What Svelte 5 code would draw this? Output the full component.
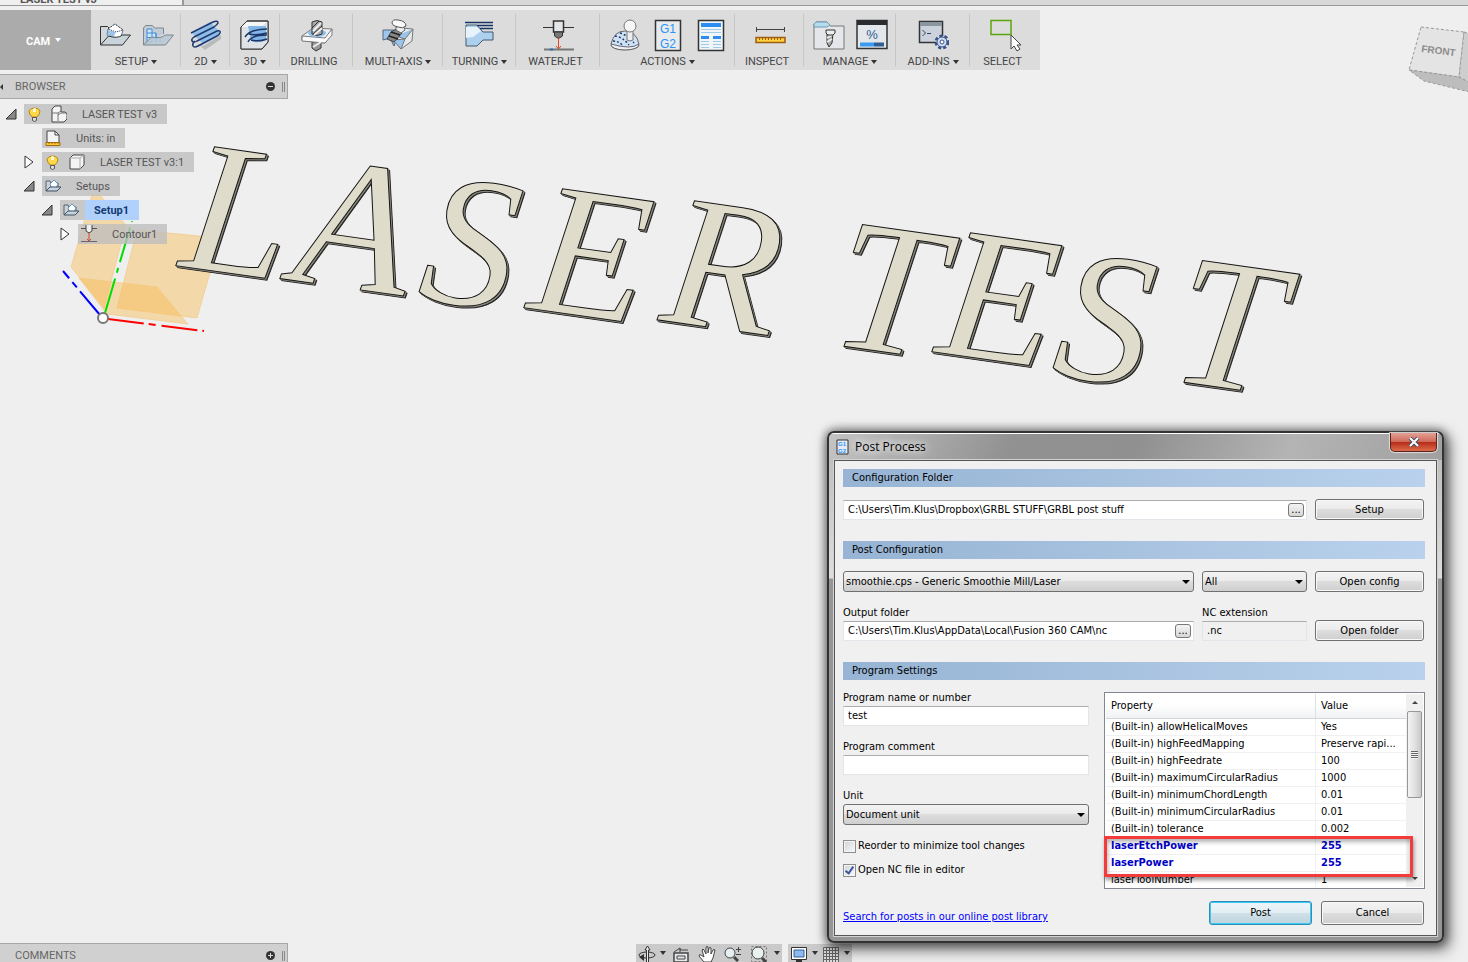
<script lang="ts">
    let configFolder = "C:\\Users\\Tim.Klus\\Dropbox\\GRBL STUFF\\GRBL post stuff";
    let outputFolder = "C:\\Users\\Tim.Klus\\AppData\\Local\\Fusion 360 CAM\\nc";
    let extension = ".nc";
    let programName = "test";
    let programComment = "";
    let reorder = false;
    let openInEditor = true;

    const groups = [
        { label: "SETUP", menu: true, icons: ["setup", "pattern"] },
        { label: "2D", menu: true, icons: ["mill2d"] },
        { label: "3D", menu: true, icons: ["mill3d"] },
        { label: "DRILLING", menu: false, icons: ["drill"] },
        { label: "MULTI-AXIS", menu: true, icons: ["multiaxis"] },
        { label: "TURNING", menu: true, icons: ["turning"] },
        { label: "WATERJET", menu: false, icons: ["waterjet"] },
        { label: "ACTIONS", menu: true, icons: ["simulate", "post", "sheet"] },
        { label: "INSPECT", menu: false, icons: ["inspect"] },
        { label: "MANAGE", menu: true, icons: ["library", "tasks"] },
        { label: "ADD-INS", menu: true, icons: ["addins"] },
        { label: "SELECT", menu: false, icons: ["select"] }
    ];

    const tree = [
        { label: "LASER TEST v3", depth: 0, state: "open", icons: ["bulb", "parts"] },
        { label: "Units: in", depth: 1, state: "", icons: ["units"] },
        { label: "LASER TEST v3:1", depth: 1, state: "closed", icons: ["bulb", "cube"] },
        { label: "Setups", depth: 1, state: "open", icons: ["folder"] },
        { label: "Setup1", depth: 2, state: "open", icons: ["folder"], active: true },
        { label: "Contour1", depth: 3, state: "closed", icons: ["jet"] }
    ];

    const properties = [
        { name: "(Built-in) allowHelicalMoves", value: "Yes" },
        { name: "(Built-in) highFeedMapping", value: "Preserve rapi..." },
        { name: "(Built-in) highFeedrate", value: "100" },
        { name: "(Built-in) maximumCircularRadius", value: "1000" },
        { name: "(Built-in) minimumChordLength", value: "0.01" },
        { name: "(Built-in) minimumCircularRadius", value: "0.01" },
        { name: "(Built-in) tolerance", value: "0.002" },
        { name: "laserEtchPower", value: "255", changed: true },
        { name: "laserPower", value: "255", changed: true },
        { name: "laserToolNumber", value: "1" }
    ];
</script>

{#snippet toolIcon(name)}
    <svg width="32" height="34" viewBox="0 0 32 34" fill="none" stroke="#333" aria-hidden="true">
        {#if name == "setup"}
            <path d="M1.500 27V8.500h7l2 2h12v6" fill="#d3d6da" />
            <path d="M9 11l7-5 8 6-2 7-9 2-5-4z" fill="#fff" stroke="#5b7fa8" />
            <path d="M9 11l7-5 8 6-7 2z" fill="#fff" stroke="#222" stroke-dasharray="1 1" />
            <path d="M9 12v5l5 3 3-6z" fill="#9cc4e8" stroke="none" />
            <path d="M1.500 27l8-9q9 3 14-1h8l-8 10z" fill="#c9d3dc" />
        {:else if name == "pattern"}
            <path d="M1.500 27V10l2-2.500h7l2 2.500h9v6" fill="#c3ccd4" stroke="#7b8791" />
            <path d="M5 11h5v13H5zM5 15h9v9M5 19.500h13v5M14 15v9" stroke="#3c8edb" fill="#cfe4f6" />
            <path d="M1.500 27l8-8q9 2 14-2h8l-8 10z" fill="#b9c8d3" fill-opacity=".85" stroke="#7b8791" />
        {:else if name == "mill2d"}
            <path d="M2 15L20 4l11 11-18 11z" fill="#8ebde8" stroke="none" />
            <path d="M13 28l18-11v4L15 32 7 25z" fill="#b9babc" stroke="none" />
            <path d="M1 15L23 4q5-2 5 1-1 2-4 4L4 19q-3 2-2 4 2 2 5 0l20-10q4-1 3 2-1 2-3 3L8 28q-4 2-5 0-1-3 2-5" stroke="#1e3a70" stroke-width="1.500" />
        {:else if name == "mill3d"}
            <path d="M2 9l6-6h21v21l-6 7H2z" fill="#f4f5f6" />
            <path d="M2 9h20l7-6v21l-7 7H2z" fill="#dfe3e8" stroke="none" />
            <path d="M9 8h18v14q-8 4-15 1z" fill="#82b6e8" stroke="none" />
            <path d="M6 19q5-8 22-8M10 16q7 2 18-1M9 24q3-7 19-7M12 22q8 2 16-1" stroke="#1c3767" stroke-width="1.500" />
            <path d="M2 9l6-6h21v21l-6 7H2z" />
        {:else if name == "drill"}
            <path d="M11 24v6l4 3 5-3v-7z" fill="#999" />
            <path d="M1 18l11-8 19 1-7 14-23-3z" fill="#edf0f2" stroke="#777" />
            <path d="M1 18l23 2 7-9v6l-7 8-23-2z" fill="#fafbfc" stroke="#777" />
            <ellipse cx="16" cy="15" rx="9" ry="4" fill="#8bbdea" stroke="none" />
            <path d="M11 4q5-3 10 0v12q-5 3-10 0z" fill="#aaa" />
            <path d="M12 13l8-8M13 17l8-7M12 29l8-5" stroke="#eee" stroke-width="2" />
            <path d="M11 10l7-7M12 16l9-8" stroke="#333" />
        {:else if name == "multiaxis"}
            <path d="M1 12h16l-5 16-4-8-7 2z" fill="#9cc6ec" stroke="#567" />
            <path d="M14 18l6-8 11 1-1 12-11 8z" fill="#e6e9eb" stroke="#777" />
            <path d="M14 18l9 3 8-10M23 21l-4 10-8-9z" fill="#9ac4eb" stroke="#777" />
            <path d="M9 14l8-4 3 5-8 9-7-3z" fill="#888" stroke="#444" />
            <path d="M7 18l9 3M9 14l9 3" stroke="#222" stroke-width="1.500" />
            <path d="M14 9l7-2 2 5-4 3-5-3z" fill="#eee" stroke="#666" />
            <path d="M10 5q0-4 6-3 8 1 8 6-3 3-8 1-6-1-6-4z" fill="#fafafa" stroke="#555" />
        {:else if name == "turning"}
            <path d="M2 7h11l6 7h10v8H19l-6 6H2z" fill="#aed0ef" stroke="#44586c" />
            <path d="M2 9h11l4 4-8 6-7 1z" fill="#e7f2fb" stroke="none" />
            <path d="M1 4.500h28M13 7.500h16M16 10.500h13" stroke="#173463" stroke-width="1.500" />
        {:else if name == "waterjet"}
            <path d="M1 9.500h31" stroke="#333" />
            <path d="M11.500 3h10v11h-10z" fill="#e4e7ea" stroke-width="1.500" />
            <path d="M12.500 14h8v4l-3 2h-2l-3-2z" fill="#777" />
            <path d="M16.500 20v11M14 28l2.500 3 2.500-3" stroke="#de4a28" />
            <path d="M2 31.500h30" stroke="#777" stroke-width="2" />
            <path d="M8 31.500h3" stroke="#2670c0" stroke-width="2" />
        {:else if name == "simulate"}
            <ellipse cx="16" cy="27" rx="14" ry="5" fill="#eef2f5" stroke="#555" />
            <path d="M2 26q3-13 14-13t14 13q-8 6-28 0z" fill="#cfe2f3" stroke="#667" />
            <path d="M6 18q8 1 14 9M11 15q9 3 14 10M4 23q6 0 10 5" stroke="#1f3a66" stroke-width="1.500" stroke-dasharray="2 2" />
            <path d="M18 10h6v12q-3 2-6 0z" fill="#ececec" stroke="#777" />
            <circle cx="21" cy="8" r="6" fill="#f6f6f6" stroke="#777" />
        {:else if name == "post"}
            <path d="M3.500 2.500h25v30h-25z" fill="#e8ebee" stroke-width="1.500" />
            <text x="16" y="15" class="gcode">G1</text>
            <text x="16" y="30" class="gcode">G2</text>
        {:else if name == "sheet"}
            <path d="M3.500 2.500h25v30h-25z" fill="#f1f5f8" stroke-width="1.500" />
            <path d="M6 7h20" stroke="#2b8df0" stroke-width="4" />
            <path d="M6 11.500h20M6 14.500h20M6 23.500h8M18 23.500h8M6 26.500h8M18 26.500h8M6 29.500h8M18 29.500h8" stroke="#9ccbe9" />
            <path d="M6 19.500h8M18 19.500h8" stroke="#2b8df0" stroke-width="3" />
        {:else if name == "inspect"}
            <path d="M2.500 11.500h28M2.500 9v5M30.500 9v5" stroke="#444" />
            <path d="M2 19.500h29v5H2z" fill="#ffd23d" stroke="#9b5e12" stroke-width="1.500" />
            <path d="M5.500 20v2M8.500 20v2M11.500 20v2M14.500 20v2M17.500 20v2M20.500 20v2M23.500 20v2M26.500 20v2" stroke="#9b5e12" />
        {:else if name == "library"}
            <path d="M1 6l2-2h11l3 4h14v23H1z" fill="#e4e6ea" stroke="#777" />
            <path d="M1 9h13l3-2-3-3H3L1 6z" fill="#b4dcec" stroke="#6f9db3" />
            <path d="M14 15h6l-1 10-3 4-2-4z" fill="#aaa" />
            <path d="M14 20l5-3M14 24l5-3" stroke="#eee" stroke-width="2" />
            <path d="M13 12h9v3l-2 2h-5l-2-2z" fill="#eee" />
        {:else if name == "tasks"}
            <path d="M1 2.500h30v28H1z" fill="#e3e7ec" stroke-width="1.500" />
            <path d="M1 4.500h30" stroke="#2a2c30" stroke-width="5" />
            <text x="16" y="21" class="percent">%</text>
            <path d="M4 26.500h14" stroke="#3b9bf2" stroke-width="4" />
            <path d="M18 26.500h10" stroke="#2e5f92" stroke-width="4" />
        {:else if name == "addins"}
            <path d="M2.500 3.500h23v21h-23z" fill="#ccd2dc" stroke-width="1.500" />
            <path d="M3 6h22" stroke="#8a969d" stroke-width="4" />
            <path d="M5.500 12l3 3-3 3M10 15.500h4" stroke="#30445e" />
            <circle cx="25" cy="24" r="6" fill="#d7e2f5" stroke="#395489" stroke-width="3" stroke-dasharray="3 2" />
            <circle cx="25" cy="24" r="5" fill="#cfdcf2" stroke="#395489" />
            <circle cx="25" cy="24" r="2" fill="#fff" stroke="#395489" />
        {:else if name == "select"}
            <path d="M2 2.500h20v14H2z" stroke="#5aa50a" stroke-width="1.500" />
            <path d="M22 17v14l3-3 3 5 3-2-3-4h4z" fill="#fff" stroke="#444" />
        {/if}
    </svg>
{/snippet}

{#snippet treeIcon(name)}
    <svg width="16" height="18" viewBox="0 0 16 18" fill="none" stroke="#444" aria-hidden="true">
        {#if name == "bulb"}
            <path d="M5 12q-3-3-3-6a6 5 0 0 1 11 0q0 3-3 6z" fill="#ffd84a" stroke="#b7890f" />
            <path d="M6 4q2-2 3 0v3H6z" fill="#fff9d8" stroke="none" />
            <path d="M5.500 12.500h4v3l-2 1-2-1z" fill="#ddd" stroke="#555" />
        {:else if name == "parts"}
            <path d="M1 4l3-3h6v6h4l2 2v5l-3 3H1z" fill="#f4f4f4" />
            <path d="M1 8h6v8M7 8l3-2M7 10l3-2h6" stroke="#777" />
        {:else if name == "cube"}
            <path d="M1 5l3-3h11v10l-4 4H1z" fill="#f4f4f4" />
            <path d="M1 5h10v11M11 5l4-3" stroke="#aaa" />
        {:else if name == "units"}
            <path d="M2 14V2h8l4 4v8" fill="#f3f4f6" />
            <path d="M10 2v4h4" />
            <path d="M1 13.500h14v3H1z" fill="#ffc933" stroke="#a36a0f" />
            <path d="M4 13v2M7 13v2M10 13v2M13 13v2" stroke="#a36a0f" />
        {:else if name == "folder"}
            <path d="M1 14V4h4l1 2h7v4" fill="#cdd3d9" stroke="#526273" />
            <path d="M5 7l4-4 4 4-2 4-5-1z" fill="#fff" stroke="#5e94c6" />
            <path d="M1 14l4-4h11l-4 4z" fill="#c6d4df" stroke="#405060" />
        {:else if name == "jet"}
            <path d="M0 3.500h16" stroke="#555" />
            <path d="M5 0v6l3 2 3-2V0" fill="#eee" />
            <path d="M8 8v8M6 14l2 2 2-2" stroke="#d8482a" />
            <path d="M0 16.500h16" stroke="#667" />
        {/if}
    </svg>
{/snippet}

<div class="app">
    <svg class="scene" aria-label="Model view">
        <g class="planes">
            <polygon points="92,195 100,195 126,225 104,308 71,267" />
            <polygon points="137,230 220,238 197,318 117,308" />
            <polygon points="79,278 157,287 188,324 107,314" />
        </g>
        <g fill="none" stroke-width="2">
            <path d="M105 313L132 221" stroke="#0d0" stroke-dasharray="36 6 5 6" />
            <path d="M100 315L63 271" stroke="#00f" stroke-dasharray="31 5 7 5" />
            <path d="M108 319L204 331" stroke="#f00" stroke-dasharray="36 5 7 6" />
        </g>
        <circle cx="103" cy="318" r="5" fill="#fff" stroke="#777" stroke-width="2" />
        <g class="solid">
            <text x="178 290 416 526 658" y="266 280 298 308 320" rotate="8">LASER</text>
            <text x="828 934 1050 1168" y="344 352 374 380" rotate="8">TEST</text>
        </g>
    </svg>

    <svg class="view-cube" viewBox="0 0 60 72" width="60" height="72" aria-label="View cube">
        <path d="M14 3l42 8 4-2v44l-9 7-50-13z" fill="#ddd" />
        <path d="M13 3l43 5-5 45L1 46z" fill="#e4e4e4" stroke="#999" stroke-dasharray="3 2" />
        <path d="M56 8l10 3v50l-15-8z" fill="#cecece" stroke="#999" stroke-dasharray="3 2" />
        <path d="M1 46l50 7 15 8v8L16 57z" fill="#bdbdbd" stroke="#999" stroke-dasharray="3 2" />
        <text x="13" y="28" transform="rotate(7 13 28)">FRONT</text>
    </svg>

    <div class="tabs"><span class="tab">LASER TEST v3</span></div>

    <header class="toolbar">
        <button class="workspace">CAM <i class="caret"></i></button>
        {#each groups as group}
            <div class="group">
                <div class="icons">
                    {#each group.icons as icon}
                        <button aria-label={icon}>{@render toolIcon(icon)}</button>
                    {/each}
                </div>
                <button class="caption" class:plain={!group.menu}>
                    {group.label}{#if group.menu}<i class="caret"></i>{/if}
                </button>
            </div>
        {/each}
    </header>

    <section class="browser">
        <div class="panel-head">
            <i class="collapse"></i>
            <span>BROWSER</span>
            <button class="dot" aria-label="Minimize browser">
                <svg width="9" height="9" viewBox="0 0 9 9"><circle cx="4.500" cy="4.500" r="4.500" fill="#333" /><path d="M2 4.500h5" stroke="#ddd" /></svg>
            </button>
            <i class="grip"></i>
        </div>
        <ul>
            {#each tree as node}
                <li style="padding-left: {node.depth * 18}px">
                    <span class="twisty">
                        {#if node.state == "open"}
                            <svg width="12" height="12" viewBox="0 0 12 12"><path d="M11 1v10H1z" fill="#888" stroke="#333" /></svg>
                        {:else if node.state == "closed"}
                            <svg width="12" height="14" viewBox="0 0 12 14"><path d="M2 1l8 6-8 6z" fill="#fff" stroke="#333" /></svg>
                        {/if}
                    </span>
                    <span class="chip">
                        {#each node.icons as icon}
                            {@render treeIcon(icon)}
                        {/each}
                        <span class="name" class:active={node.active}>{node.label}</span>
                    </span>
                </li>
            {/each}
        </ul>
    </section>

    <div class="comments panel-head">
        <span>COMMENTS</span>
        <button class="dot" aria-label="Add comment">
            <svg width="9" height="9" viewBox="0 0 9 9"><circle cx="4.500" cy="4.500" r="4.500" fill="#333" /><path d="M2 4.500h5M4.500 2v5" stroke="#ddd" /></svg>
        </button>
        <i class="grip"></i>
    </div>

    <nav class="navbar">
        <div class="tools">
            <button aria-label="Orbit">
                <svg width="18" height="18" viewBox="0 0 18 18" fill="none" stroke="#333"><ellipse cx="9" cy="11" rx="8" ry="3" /><path d="M8.500 18V6H7l2.500-4L12 6h-1.500v12" fill="#eee" /><path d="M6 10l-5 3 5 4z" fill="#333" stroke="none" /></svg>
            </button>
            <i class="caret"></i>
            <button class="wide" aria-label="Look at">
                <svg width="18" height="18" viewBox="0 0 18 18" fill="none" stroke="#444"><path d="M2 8l6-4v2h8M8 4v4" /><path d="M2 9h14v9H2z" fill="#e5e8eb" stroke-width="1.500" /><path d="M5 12h8v3H5z" /></svg>
            </button>
            <button class="wide" aria-label="Pan">
                <svg width="18" height="18" viewBox="0 0 18 18" fill="#fff" stroke="#444"><path d="M6 18l-5-6q0-2 2-1l3 2-2-7q1-2 2 0l2 4V3q1-1 2 0v6l1-5q1-1 2 0v6l2-4q1-1 2 0l-2 8-2 4z" /></svg>
            </button>
            <button class="wide" aria-label="Zoom">
                <svg width="18" height="18" viewBox="0 0 18 18" fill="none" stroke="#444"><circle cx="6" cy="9" r="5" fill="#e6eef2" /><path d="M10 13l4 4" stroke-width="3" /><path d="M14.500 3v5M12 5.500h5M12 10.500h5" /></svg>
            </button>
            <button class="wide" aria-label="Fit">
                <svg width="18" height="18" viewBox="0 0 18 18" fill="none" stroke="#444"><path d="M1.500 2.500h15v15h-15z" stroke="#777" stroke-dasharray="2 2" /><circle cx="8" cy="9" r="6" fill="#e9f1f0" /><path d="M12 14l4 4" stroke-width="3" /></svg>
            </button>
            <i class="caret"></i>
        </div>
        <div class="tools">
            <button aria-label="Display settings">
                <svg width="18" height="18" viewBox="0 0 18 18" fill="#fff" stroke="#333"><path d="M1.500 3.500h15v12h-15z" /><path d="M4 6h10v7H4z" fill="#8db9ef" stroke="#35609d" /><path d="M6 17h6" stroke-width="2" /></svg>
            </button>
            <i class="caret"></i>
            <button aria-label="Grid settings">
                <svg width="18" height="18" viewBox="0 0 18 18" fill="#ddd" stroke="#666"><path d="M1.500 3.500h15v15h-15zM4.500 3v16M7.500 3v16M10.500 3v16M13.500 3v16M1 6.500h16M1 9.500h16M1 12.500h16M1 15.500h16" /></svg>
            </button>
            <i class="caret"></i>
        </div>
    </nav>

    <div class="dialog" role="dialog" aria-label="Post Process">
        <div class="titlebar">
            <svg width="13" height="16" viewBox="0 0 13 16"><path d="M1 1h11v14H1z" fill="#e4ebf3" stroke="#333" /><text x="6" y="7" class="tiny">G1</text><text x="6" y="14" class="tiny">G2</text></svg>
            <h1>Post Process</h1>
            <button class="close" aria-label="Close">
                <svg width="12" height="10" viewBox="0 0 12 10"><path d="M2 1l8 8M10 1L2 9" stroke="#444c5c" stroke-width="4" /><path d="M2 1l8 8M10 1L2 9" stroke="#fff" stroke-width="2" /></svg>
            </button>
        </div>
        <div class="client">
            <h2>Configuration Folder</h2>
            <div class="row">
                <div class="field span">
                    <input type="text" aria-label="Configuration folder" bind:value={configFolder}>
                    <button class="browse" aria-label="Browse configuration folder">...</button>
                </div>
                <button class="push">Setup</button>
            </div>

            <h2>Post Configuration</h2>
            <div class="row">
                <div class="drop">
                    <select aria-label="Post processor"><option>smoothie.cps - Generic Smoothie Mill/Laser</option></select>
                </div>
                <div class="drop">
                    <select aria-label="Filter"><option>All</option></select>
                </div>
                <button class="push">Open config</button>
            </div>
            <div class="row labelled">
                <div>
                    <label for="output">Output folder</label>
                    <div class="field">
                        <input id="output" type="text" bind:value={outputFolder}>
                        <button class="browse" aria-label="Browse output folder">...</button>
                    </div>
                </div>
                <div>
                    <label for="extension">NC extension</label>
                    <div class="field off"><input id="extension" type="text" readonly bind:value={extension}></div>
                </div>
                <button class="push">Open folder</button>
            </div>

            <h2>Program Settings</h2>
            <div class="settings">
                <div class="program">
                    <div class="item">
                        <label for="program">Program name or number</label>
                        <div class="field"><input id="program" type="text" bind:value={programName}></div>
                    </div>
                    <div class="item">
                        <label for="comment">Program comment</label>
                        <div class="field"><input id="comment" type="text" bind:value={programComment}></div>
                    </div>
                    <div class="item">
                        <label for="unit">Unit</label>
                        <div class="drop"><select id="unit"><option>Document unit</option></select></div>
                    </div>
                    <label class="check"><input type="checkbox" bind:checked={reorder}>Reorder to minimize tool changes</label>
                    <label class="check"><input type="checkbox" bind:checked={openInEditor}>Open NC file in editor</label>
                </div>

                <div class="list">
                    <div class="rows">
                        <table>
                            <thead>
                                <tr><th>Property</th><th>Value</th></tr>
                            </thead>
                            <tbody>
                                {#each properties as property}
                                    <tr class:changed={property.changed}>
                                        <td>{property.name}</td>
                                        <td>{property.value}</td>
                                    </tr>
                                {/each}
                            </tbody>
                        </table>
                    </div>
                    <div class="scrollbar">
                        <i class="up"></i>
                        <div class="thumb"><i></i></div>
                        <i class="down"></i>
                    </div>
                    <div class="marker"></div>
                </div>
            </div>

            <div class="footer">
                <a href="#library">Search for posts in our online post library</a>
                <button class="push default">Post</button>
                <button class="push">Cancel</button>
            </div>
        </div>
    </div>
</div>

<style>
    :global(body) {
        background: #efefef;
    }

    .app {
        position: relative;
        min-height: 100vh;
        overflow: hidden;
        font: 11px/16px Roboto, "Liberation Sans", sans-serif;
        color: #444;
    }

    button {
        margin: 0;
        padding: 0;
        border: 0;
        background: none;
        font: inherit;
        color: inherit;
    }

    svg {
        display: block;
        flex: none;
    }

    .caret {
        display: inline-block;
        border: 3px solid transparent;
        border-top: 4px solid #333;
        border-bottom: 0;
    }

    /* model view */
    .scene {
        position: absolute;
        top: 0;
        left: 0;
        width: 100%;
        height: 100%;
        overflow: visible;
    }

    .planes polygon {
        fill: #f9bd55;
        fill-opacity: 0.45;
        stroke: #f3c47c;
        stroke-opacity: 0.6;
    }

    .solid text {
        font: italic 188px "Liberation Serif", serif;
        fill: #dfdccb;
        stroke: #111;
    }

    .solid {
        filter: drop-shadow(1px 1px 0 #8d8b80) drop-shadow(1px 1px 0 #222);
    }

    .view-cube {
        position: absolute;
        top: 24px;
        right: 0;
    }

    .view-cube text {
        font: bold 10px "Liberation Sans", sans-serif;
        fill: #8b8b8b;
    }

    /* top bars */
    .tabs {
        position: relative;
        display: flex;
        align-items: flex-end;
        height: 5px;
        overflow: hidden;
        background: #d8d8d8;
        border-bottom: 1px solid #999;
    }

    .tab {
        width: 162px;
        padding-left: 20px;
        background: #efefef;
        border-right: 2px solid #999;
        font-weight: bold;
        line-height: 10px;
        color: #555;
    }

    .toolbar {
        position: relative;
        display: grid;
        grid-template-columns: 91px 90px 49px 50px 73px 90px 73px 84px 135px 69px 92px 74px 70px;
        width: fit-content;
        height: 60px;
        margin-top: 4px;
        background: #dcdcdc;
    }

    .workspace {
        padding: 3px 4px 0 0;
        background: #ababab;
        color: #fff;
        font-weight: bold;
    }

    .workspace .caret {
        margin: 0 0 3px 2px;
        border-top-color: #fff;
    }

    .group {
        display: flex;
        flex-direction: column;
        align-items: center;
        padding-top: 6px;
        background: linear-gradient(#c6c6c6, #c6c6c6) right 4px / 1px 52px no-repeat;
    }

    .group:last-child {
        background: none;
    }

    .icons {
        display: flex;
        gap: 11px;
        height: 38px;
    }

    .caption {
        display: flex;
        align-items: center;
        gap: 3px;
        white-space: nowrap;
    }

    .caption.plain {
        padding-right: 5px;
    }

    .gcode {
        font: 12px "Liberation Sans", sans-serif;
        fill: #2b93f5;
        stroke-width: 0;
        text-anchor: middle;
    }

    .percent {
        font: 13px "Liberation Sans", sans-serif;
        fill: #2e5f92;
        stroke-width: 0;
        text-anchor: middle;
    }

    .tiny {
        font: bold 6px "Liberation Sans", sans-serif;
        fill: #2b93f5;
        text-anchor: middle;
    }

    /* browser panel */
    .browser {
        position: relative;
        width: 288px;
        margin-top: 4px;
    }

    .panel-head {
        display: flex;
        align-items: center;
        box-sizing: border-box;
        width: 288px;
        height: 25px;
        padding: 0 2px 0 15px;
        border: 1px solid #a6a6a6;
        border-left: 0;
        background: #d0d0d0;
        color: #666;
    }

    .panel-head span {
        flex: 1;
    }

    .collapse {
        position: absolute;
        left: 0;
        border: 3px solid transparent;
        border-right: 3px solid #333;
        border-left: 0;
    }

    .grip {
        width: 1px;
        height: 10px;
        margin-left: 7px;
        border: solid #888;
        border-width: 0 1px;
    }

    .comments {
        position: absolute;
        bottom: -6px;
        left: 0;
    }

    ul {
        display: flex;
        flex-direction: column;
        gap: 4px;
        margin: 5px 0 0;
        padding: 0;
        list-style: none;
    }

    li {
        display: flex;
        align-items: center;
        height: 20px;
    }

    .twisty {
        width: 19px;
        padding-left: 5px;
    }

    .chip {
        display: flex;
        align-items: center;
        gap: 8px;
        padding-left: 3px;
        background: rgba(190, 190, 190, 0.8);
    }

    .name {
        margin-left: -2px;
        padding: 1px 10px 0 9px;
        line-height: 19px;
        white-space: nowrap;
        color: #555;
    }

    .name.active {
        background: #afd1fb;
        font-weight: bold;
        color: #153a73;
    }

    /* navigation bar */
    .navbar {
        position: absolute;
        bottom: 0;
        left: 636px;
        display: flex;
        gap: 6px;
    }

    .tools {
        display: flex;
        align-items: center;
        gap: 4px;
        height: 18px;
        padding: 0 2px;
        background: #cacaca;
    }

    .wide {
        padding: 0 2px;
    }

    /* post process window */
    .dialog {
        position: absolute;
        top: 431px;
        right: 24px;
        box-sizing: border-box;
        width: 617px;
        padding: 0 5px 5px;
        border: 2px solid #333;
        border-radius: 7px;
        background: linear-gradient(#fff, #fff) 0 0 / 100% 1px no-repeat,
            linear-gradient(115deg, #c4c4c4, #919191 30%, #909090 50%, #b4b4b4 75%, #a0a0a0) 0 0 / 100% 27px no-repeat,
            linear-gradient(#b8b8b8, #dedede 145px, #969696 146px);
        box-shadow: 0 0 8px 2px rgba(0, 0, 0, 0.4), 4px 5px 14px 2px rgba(0, 0, 0, 0.5);
        font: 11px/18px "DejaVu Sans Condensed", Tahoma, sans-serif;
        color: #000;
    }

    .titlebar {
        display: flex;
        align-items: center;
        gap: 6px;
        height: 27px;
        padding-left: 2px;
    }

    h1 {
        flex: 1;
        margin: 0;
        font: 12px/16px "Open Sans", sans-serif;
        text-shadow: 0 0 8px #fff, 0 0 8px #fff;
    }

    .close {
        display: flex;
        align-items: center;
        justify-content: center;
        align-self: flex-start;
        width: 47px;
        height: 19px;
        border: 1px solid #5d211c;
        border-top: 0;
        border-radius: 0 0 5px 5px;
        background: linear-gradient(#e2a194, #d0695a 48%, #b62b18 50%, #dc6b4b);
        box-shadow: 0 0 1px 1px #ddd;
    }

    .client {
        padding: 8px 11px 10px 8px;
        border: 1px solid #555;
        background: #f0f0f0;
        box-shadow: 0 0 0 1px #d2d2d2;
    }

    h2 {
        margin: 0 0 12px;
        padding-left: 9px;
        background: linear-gradient(90deg, #97b4d4, #b9d1ec);
        font: inherit;
        line-height: 18px;
    }

    .row {
        display: grid;
        grid-template-columns: 1fr 105px 109px;
        gap: 8px;
        align-items: end;
        padding-right: 1px;
    }

    .row + h2 {
        margin-top: 21px;
    }

    .labelled {
        margin-top: 15px;
    }

    .span {
        grid-column: span 2;
    }

    label {
        display: block;
        margin-bottom: 2px;
        line-height: 12px;
    }

    .field {
        display: flex;
        align-items: center;
        box-sizing: border-box;
        height: 20px;
        padding-right: 2px;
        border: 1px solid #e2e5ea;
        border-top-color: #abadb3;
        background: #fff;
    }

    .field.off {
        background: #f0f0f0;
    }

    .field input {
        flex: 1;
        min-width: 0;
        padding: 0 4px;
        border: 0;
        outline: 0;
        background: none;
        font: inherit;
        color: inherit;
    }

    .browse {
        width: 16px;
        height: 14px;
        border: 1px solid #777;
        border-radius: 3px;
        background: linear-gradient(#f4f4f4, #d6d6d6);
        line-height: 12px;
    }

    .push {
        height: 21px;
        border: 1px solid #707070;
        border-radius: 3px;
        background: linear-gradient(#f3f3f3, #ebebeb 48%, #dddddd 50%, #cfcfcf);
        box-shadow: inset 0 0 0 1px #f8f8f8;
    }

    .drop {
        position: relative;
    }

    .drop::after {
        content: "";
        position: absolute;
        top: 9px;
        right: 4px;
        border: 4px solid transparent;
        border-top-color: #000;
        border-bottom: 0;
        pointer-events: none;
    }

    select {
        display: block;
        appearance: none;
        width: 100%;
        height: 21px;
        padding: 0 2px;
        border: 1px solid #707070;
        border-radius: 3px;
        background: linear-gradient(#f3f3f3, #ebebeb 48%, #dddddd 50%, #cfcfcf);
        font: inherit;
        color: inherit;
    }

    .settings {
        display: grid;
        grid-template-columns: 246px 1fr;
        gap: 15px;
    }

    .item {
        margin-bottom: 15px;
    }

    .check {
        display: flex;
        align-items: center;
        gap: 2px;
        height: 12px;
        margin-bottom: 12px;
    }

    .check input {
        appearance: none;
        flex: none;
        width: 13px;
        height: 13px;
        margin: 0;
        border: 1px solid #8e8f8f;
        background: linear-gradient(135deg, #cfd3d8, #fafafa);
        box-shadow: inset 0 0 0 1px #f4f4f4;
    }

    .check input:checked::after {
        content: "";
        display: block;
        width: 3px;
        height: 7px;
        margin: 0 0 0 3px;
        border: solid #3c559c;
        border-width: 0 2px 2px 0;
        transform: rotate(35deg);
    }

    .list {
        position: relative;
        display: flex;
        box-sizing: border-box;
        height: 197px;
        padding: 1px;
        border: 1px solid #828790;
        background: #fff;
    }

    .rows {
        flex: 1;
        overflow: hidden;
    }

    table {
        width: 100%;
        table-layout: fixed;
        border-collapse: collapse;
        line-height: 16px;
    }

    th {
        height: 24px;
        padding: 0 0 0 5px;
        border-bottom: 1px solid #d5d5d5;
        background: linear-gradient(#fff 40%, #f1f2f4);
        font-weight: normal;
        text-align: left;
    }

    th:first-child {
        width: 204px;
        border-right: 1px solid #dfe0e2;
    }

    td {
        height: 16px;
        padding: 0 0 0 5px;
        border-bottom: 1px solid #f0f0f0;
        white-space: nowrap;
    }

    td:first-child {
        border-right: 1px solid #f0f0f0;
    }

    .changed td {
        font-weight: bold;
        color: #0000c8;
    }

    .scrollbar {
        display: flex;
        flex-direction: column;
        align-items: center;
        width: 17px;
        background: #f0f0f0;
    }

    .up,
    .down {
        margin: 7px 0;
        border: 3px solid transparent;
    }

    .up {
        border-top: 0;
        border-bottom-color: #444;
    }

    .down {
        margin-top: auto;
        border-bottom: 0;
        border-top-color: #444;
    }

    .thumb {
        display: flex;
        align-items: center;
        justify-content: center;
        width: 13px;
        height: 85px;
        border: 1px solid #979797;
        border-radius: 2px;
        background: linear-gradient(90deg, #f3f3f3, #e2e2e2 50%, #c9c9c9);
    }

    .thumb i {
        width: 7px;
        height: 8px;
        background: repeating-linear-gradient(#666 0 1px, #f4f4f4 1px 2px);
    }

    /* highlight over the laser rows */
    .marker {
        position: absolute;
        top: 143px;
        left: -1px;
        right: 11px;
        height: 35px;
        border: 3px solid #f43b3b;
        box-shadow: 1px 3px 4px rgba(0, 0, 0, 0.4), inset 1px 3px 4px rgba(0, 0, 0, 0.3);
    }

    .footer {
        display: grid;
        grid-template-columns: 1fr 103px 103px;
        gap: 9px;
        align-items: end;
        margin-top: 12px;
        padding-right: 1px;
    }

    .footer a {
        line-height: 16px;
        color: #00f;
    }

    .footer .push {
        height: 24px;
    }

    .default {
        border-color: #2f8fb5;
        background: linear-gradient(#eef5f8, #e2eef3 48%, #d0e0e8 50%, #bed4df);
        box-shadow: inset 0 0 0 1px #3cc8f4;
    }
</style>
